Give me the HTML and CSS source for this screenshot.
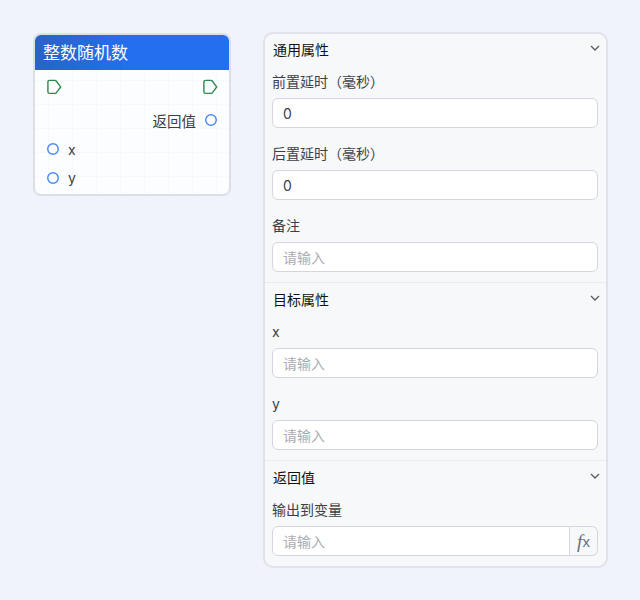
FILE: index.html
```html
<!DOCTYPE html>
<html lang="zh-CN">
<head>
  <meta charset="UTF-8" />
  <title>整数随机数</title>
  <link rel="stylesheet" href="styles.css">
</head>
<body>
  <div class="page">
    <div class="node">
      <div class="node-title">整数随机数</div>
      <div class="node-body">
        <div class="node-row flow-row">
          <svg class="flow-port" width="16" height="16" viewBox="0 0 16 16"><path d="M3.500 1.400H9a1.500 1.500 0 0 1 1.200.6L14.700 7.900l-4.500 5.900a1.500 1.500 0 0 1-1.200.6H3.500a1.600 1.600 0 0 1-1.600-1.600V3a1.600 1.600 0 0 1 1.600-1.600z"/></svg>
          <svg class="flow-port" width="16" height="16" viewBox="0 0 16 16"><path d="M3.500 1.400H9a1.500 1.500 0 0 1 1.200.6L14.700 7.900l-4.500 5.900a1.500 1.500 0 0 1-1.200.6H3.500a1.600 1.600 0 0 1-1.600-1.600V3a1.600 1.600 0 0 1 1.600-1.600z"/></svg>
        </div>
        <div class="node-row out-row">
          <span>返回值</span>
          <svg class="port" width="12" height="12" viewBox="0 0 12 12"><circle cx="6" cy="6" r="5.250"/></svg>
        </div>
        <div class="node-row in-row">
          <svg class="port" width="12" height="12" viewBox="0 0 12 12"><circle cx="6" cy="6" r="5.250"/></svg>
          <span>x</span>
        </div>
        <div class="node-row in-row">
          <svg class="port" width="12" height="12" viewBox="0 0 12 12"><circle cx="6" cy="6" r="5.250"/></svg>
          <span>y</span>
        </div>
      </div>
    </div>

    <div class="panel">
      <section class="group">
        <div class="group-head">
          <span>通用属性</span>
          <svg class="chevron" width="10" height="10" viewBox="0 0 10 10"><path d="M1 3l4 4 4-4"/></svg>
        </div>
        <div class="field">
          <label>前置延时（毫秒）</label>
          <div class="input">0</div>
        </div>
        <div class="field">
          <label>后置延时（毫秒）</label>
          <div class="input">0</div>
        </div>
        <div class="field">
          <label>备注</label>
          <div class="input empty">请输入</div>
        </div>
      </section>

      <section class="group">
        <div class="group-head">
          <span>目标属性</span>
          <svg class="chevron" width="10" height="10" viewBox="0 0 10 10"><path d="M1 3l4 4 4-4"/></svg>
        </div>
        <div class="field">
          <label>x</label>
          <div class="input empty">请输入</div>
        </div>
        <div class="field">
          <label>y</label>
          <div class="input empty">请输入</div>
        </div>
      </section>

      <section class="group">
        <div class="group-head">
          <span>返回值</span>
          <svg class="chevron" width="10" height="10" viewBox="0 0 10 10"><path d="M1 3l4 4 4-4"/></svg>
        </div>
        <div class="field">
          <label>输出到变量</label>
          <div class="input-group">
            <div class="input empty">请输入</div>
            <div class="fx"><em class="fx-f">f</em><span class="fx-x">x</span></div>
          </div>
        </div>
      </section>
    </div>
  </div>
</body>
</html>
```

FILE: styles.css
```css
* { margin: 0; padding: 0; box-sizing: border-box; }
html, body {
  width: 100%;
  height: 100%;
  overflow: hidden;
  background: #f0f3fb;
  font-family: "Inter", "Noto Sans CJK SC", sans-serif;
  font-size: 14px;
  color: #3b3f46;
}

.page {
  display: flex;
  align-items: flex-start;
  gap: 32px;
  padding: 32px 0 0 33px;
}

.node {
  width: 198px;
  margin-top: 1px;
  border: 2px solid #dcdfe8;
  border-radius: 8px;
  overflow: hidden;
  background: #fcfdff;
}

.node-title {
  height: 35px;
  padding-left: 8px;
  line-height: 36px;
  font-size: 17px;
  color: #fff;
  background: linear-gradient(90deg, #2a62c6, #246fef 50%);
}

.node-body {
  height: 124px;
  padding: 9px 11px 0;
  background-color: #fcfdff;
  background-image:
    linear-gradient(#f6f8fd 1px, transparent 1px),
    linear-gradient(90deg, #f6f8fd 1px, transparent 1px);
  background-size: 24px 24px;
  background-position: 13px 10px;
}

.node-row {
  display: flex;
  align-items: center;
}

.flow-row {
  height: 16px;
  justify-content: space-between;
  margin-bottom: 17px;
}

.flow-port {
  display: block;
  fill: none;
  stroke: #2d8a4e;
  stroke-width: 1.4;
}

.out-row {
  height: 16px;
  justify-content: flex-end;
  gap: 9px;
  margin-bottom: 13px;
  padding-right: 1px;
  font-size: 14.5px;
}

.in-row {
  height: 16px;
  gap: 9px;
  margin-bottom: 13px;
  padding-left: 1px;
}

.in-row:last-child span { margin-top: -2px; }

.port {
  display: block;
  fill: #fff;
  stroke: #4a8bf5;
  stroke-width: 1.5;
}

.panel {
  width: 345px;
  height: 536px;
  border: 2px solid #dfe2e9;
  border-radius: 10px;
  background: #f7f8fa;
  overflow: hidden;
}

.group {
  padding: 0 8px 10px 7px;
  border-bottom: 1px solid #e9ebf0;
}

.group + .group { padding-top: 1px; }
.group:last-child { border-bottom: 0; }

.group-head {
  display: flex;
  align-items: center;
  justify-content: space-between;
  height: 30px;
  padding-left: 1px;
  color: #111;
}

.chevron {
  display: block;
  margin: -2px -2px 0 0;
  fill: none;
  stroke: #555a63;
  stroke-width: 1.3;
}

.field { padding-top: 6px; }
.field + .field { padding-top: 14px; }

.field label {
  display: block;
  height: 22px;
  line-height: 24px;
  margin-bottom: 6px;
}

.input {
  height: 30px;
  padding: 0 10px;
  line-height: 29px;
  border: 1px solid #d3d6e0;
  border-radius: 6px;
  background: #fff;
}

.input.empty { color: #a9acb3; }

.input-group { display: flex; }

.input-group .input {
  flex: 1;
  border-radius: 6px 0 0 6px;
}

.fx {
  width: 28px;
  height: 30px;
  display: flex;
  align-items: center;
  justify-content: center;
  border: 1px solid #d3d6e0;
  border-left: 0;
  border-radius: 0 6px 6px 0;
  background: #f7f8fa;
  color: #6b6f78;
}

.fx-f {
  font-family: "Liberation Serif", serif;
  font-size: 19px;
  line-height: 1;
}

.fx-x {
  font-family: "Liberation Sans", sans-serif;
  font-size: 15px;
  line-height: 1;
}
```
